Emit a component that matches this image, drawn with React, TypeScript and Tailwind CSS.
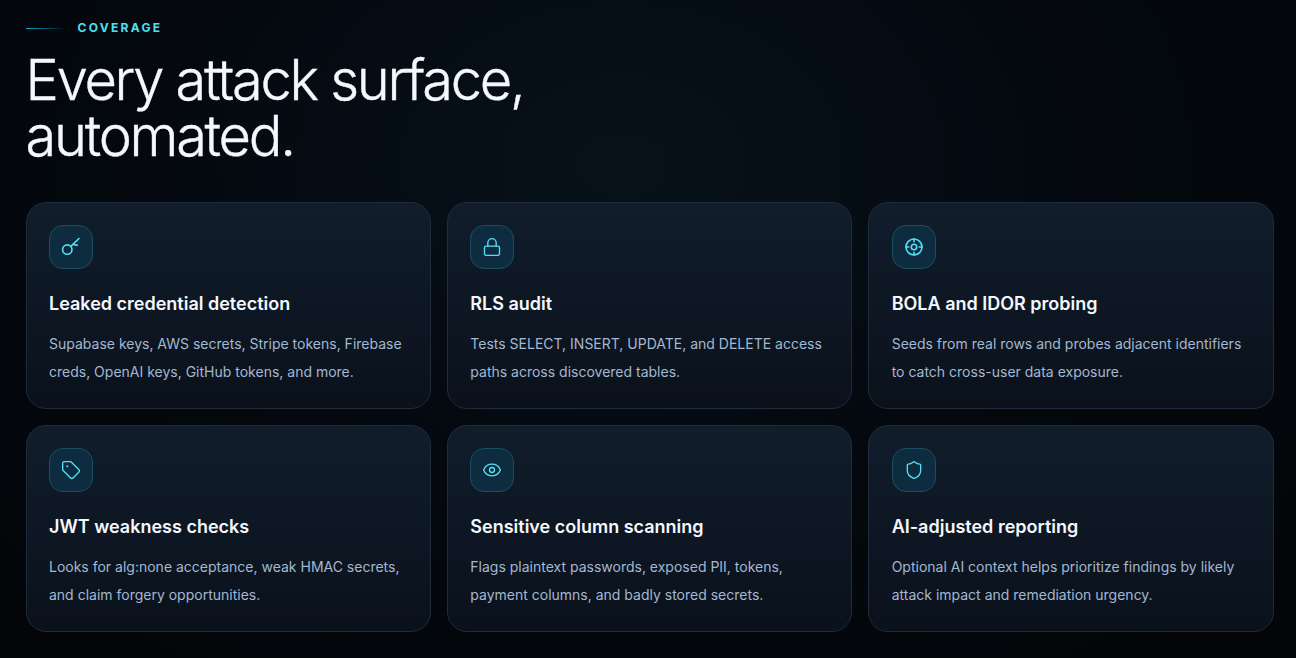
import { Eye, Lock, Shield, Tag } from "lucide-react";
import type { ReactNode } from "react";

function KeyIcon() {
  return (
    <svg width="20" height="20" viewBox="0 0 20 20" fill="none" stroke="currentColor" strokeWidth="1.6" strokeLinecap="round" strokeLinejoin="round">
      <circle cx="6.3" cy="12.6" r="4.7" />
      <path d="M9.8 9.4 18 1.5" />
      <path d="M13 7.6 16.4 8.2" />
    </svg>
  );
}

function TargetIcon() {
  return (
    <svg width="20" height="20" viewBox="0 0 20 20" fill="none" stroke="currentColor" strokeWidth="1.6" strokeLinecap="round">
      <circle cx="10" cy="10" r="8" />
      <circle cx="10" cy="10" r="2.7" />
      <path d="M10 2v2.8M10 15.2V18M2 10h2.8M15.2 10H18" />
    </svg>
  );
}

const cards: { icon: ReactNode; title: string; lines: string[] }[] = [
  {
    icon: <KeyIcon />,
    title: "Leaked credential detection",
    lines: ["Supabase keys, AWS secrets, Stripe tokens, Firebase", "creds, OpenAI keys, GitHub tokens, and more."],
  },
  {
    icon: <Lock size={20} strokeWidth={1.6} />,
    title: "RLS audit",
    lines: ["Tests SELECT, INSERT, UPDATE, and DELETE access", "paths across discovered tables."],
  },
  {
    icon: <TargetIcon />,
    title: "BOLA and IDOR probing",
    lines: ["Seeds from real rows and probes adjacent identifiers", "to catch cross-user data exposure."],
  },
  {
    icon: <Tag size={20} strokeWidth={1.6} />,
    title: "JWT weakness checks",
    lines: ["Looks for alg:none acceptance, weak HMAC secrets,", "and claim forgery opportunities."],
  },
  {
    icon: <Eye size={20} strokeWidth={1.6} />,
    title: "Sensitive column scanning",
    lines: ["Flags plaintext passwords, exposed PII, tokens,", "payment columns, and badly stored secrets."],
  },
  {
    icon: <Shield size={20} strokeWidth={1.6} />,
    title: "AI-adjusted reporting",
    lines: ["Optional AI context helps prioritize findings by likely", "attack impact and remediation urgency."],
  },
];

function Card({ icon, title, lines }: { icon: ReactNode; title: string; lines: string[] }) {
  return (
    <div className="h-[207px] rounded-[20px] border border-[#1e2c3d] bg-gradient-to-b from-[#111d2c] to-[#0a111b] px-[22.4px] pt-[22px]">
      <div className="flex h-[44px] w-[44px] items-center justify-center rounded-[14px] border border-[#1b4e60] bg-[#0e2c40] text-[#55e0f5]">
        {icon}
      </div>
      <h3 className="mt-[21px] text-[18px] leading-[27px] font-semibold text-[#f4f8fc]">{title}</h3>
      <p className="mt-[13px] text-[14px] leading-[28px] text-[#a3b8d2]">
        {lines.map((line) => (
          <span key={line} className="block whitespace-nowrap">
            {line}
          </span>
        ))}
      </p>
    </div>
  );
}

export default function App() {
  return (
    <section className="h-[658px] overflow-hidden bg-[radial-gradient(ellipse_at_48%_25%,#07121b_0%,#04090f_45%,#030507_100%)] pt-[19px] pr-[22.4px] pl-[25.6px] font-['Inter',sans-serif]">
      <div className="flex h-[18px] items-center gap-3">
        <span className="h-px w-10 bg-gradient-to-r from-[#0ea5d0] to-transparent" />
        <span className="text-[12px] leading-[18px] font-bold tracking-[0.19em] text-[#4fe0f5]">COVERAGE</span>
      </div>
      <h1 className="mt-[15px] text-[56px] leading-[56px] font-light tracking-[-0.041em] text-[#f4f8fc] [-webkit-text-stroke:0.4px_#f4f8fc]">
        Every attack surface,
        <br />
        automated.
      </h1>
      <div className="mt-[38px] grid grid-cols-3 gap-4">
        {cards.map((card) => (
          <Card key={card.title} {...card} />
        ))}
      </div>
    </section>
  );
}
